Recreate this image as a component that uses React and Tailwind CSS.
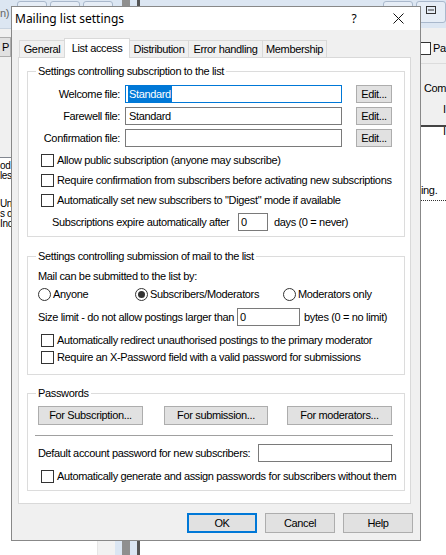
import React from 'react';

const ui = "font-['Liberation_Sans',Arial,sans-serif]";
const titleFont = "font-['Noto_Sans','Open_Sans',sans-serif]";

function Check({ children, className = '' }) {
  return (
    <div className={`flex items-center ${className}`}>
      <span className="w-[13px] h-[13px] shrink-0 border border-[#333] bg-white" />
      <span className="ml-[3px] whitespace-nowrap">{children}</span>
    </div>
  );
}

function Radio({ children, checked, className = '' }) {
  return (
    <div className={`flex items-center ${className}`}>
      <span className="w-[13px] h-[13px] shrink-0 rounded-full border border-[#333] bg-white flex items-center justify-center">
        {checked && <span className="w-[7px] h-[7px] rounded-full bg-[#333]" />}
      </span>
      <span className="ml-[2px] whitespace-nowrap">{children}</span>
    </div>
  );
}

function Btn({ children, className = '', primary }) {
  return (
    <button
      type="button"
      className={`flex items-center justify-center bg-[#e1e1e1] whitespace-nowrap ${
        primary ? 'border-2 border-[#0078d7]' : 'border border-[#adadad]'
      } ${className}`}
    >
      {children}
    </button>
  );
}

function Field({ children, className = '', focused }) {
  return (
    <div
      className={`h-[18px] bg-white border flex items-center pl-[2px] whitespace-nowrap ${
        focused ? 'border-[#0078d7]' : 'border-[#7a7a7a]'
      } ${className}`}
    >
      {children}
    </div>
  );
}

function Group({ title, className = '', children }) {
  return (
    <fieldset className={`ml-[8px] w-[378px] border border-[#dcdcdc] ${className}`}>
      <legend className="ml-[8px] px-[2px] leading-[13px]">{title}</legend>
      {children}
    </fieldset>
  );
}

function FileRow({ label, className = '', children, focused }) {
  return (
    <div className={`flex items-center h-[18px] ${className}`}>
      <span className="w-[92px] text-right whitespace-nowrap">{label}</span>
      <Field className="ml-[5px] w-[217px]" focused={focused}>{children}</Field>
      <Btn className="ml-[14px] w-[36px] h-[18px]">Edit...</Btn>
    </div>
  );
}

const tabs = [
  { name: 'General', w: 'w-[46px]' },
  { name: 'List access', w: 'w-[66px]', active: true },
  { name: 'Distribution', w: 'w-[59px]' },
  { name: 'Error handling', w: 'w-[74px]' },
  { name: 'Membership', w: 'w-[64px]' },
];

export default function App() {
  return (
    <div className={`relative w-[446px] h-[555px] overflow-hidden bg-white text-[11px] tracking-[-0.35px] text-black ${ui}`}>
      {/* main window behind the dialog */}
      <div className="flex h-full">
        <div className="w-[115px] flex flex-col">
          <div className="h-[28px] bg-[#dce6f2] flex items-start">
            <span className="mt-[5px] text-[#666]">n)</span>
            <div className="ml-[8px] mt-[1px] w-[30px] h-[22px] rounded-[3px] border border-[#a9b8cc] bg-[#e6edf6]" />
            <div className="ml-[3px] mt-[1px] w-[30px] h-[22px] rounded-[3px] border border-[#a9b8cc] bg-[#e6edf6]" />
            <div className="ml-[3px] mt-[1px] w-[30px] h-[22px] rounded-[3px] border border-[#a9b8cc] bg-[#e6edf6]" />
          </div>
          <div className="h-[129px] bg-[#f0f0f0] border-t border-[#c8d3e0]">
            <Btn className="mt-[8px] -ml-[29px] w-[40px] h-[20px] justify-end pr-[1px]">P</Btn>
          </div>
          <div className="flex-1 flex border-t border-[#828790]">
            <div className="w-[97px] leading-[10px] text-[10px]">
              <div className="mt-[3px]">od</div>
              <div>les</div>
              <div className="mt-[18px]">Uni</div>
              <div>s o</div>
              <div>Inc</div>
            </div>
            <div className="w-[18px] bg-[#f2f2f2] border-l border-[#e6e6e6]" />
          </div>
        </div>
        <div className="w-[22px] flex">
          <div className="w-[7px] bg-[#dbe6f3]" />
          <div className="w-[8px] bg-[#8f8f8f]" />
          <div className="w-[7px] bg-[#dbe6f3]" />
        </div>
        <div className="flex-1 flex flex-col border-l-[3px] border-[#555]">
          <div className="h-[28px] bg-[#dce6f2] flex items-start">
            <div className="ml-[243px] mt-[1px] w-[30px] h-[22px] rounded-[3px] border border-[#a9b8cc] bg-[#e6edf6]" />
            <div className="ml-[3px] mt-[1px] w-[30px] h-[22px] rounded-[3px] border border-[#a9b8cc] bg-[#e6edf6] flex justify-center pt-[4px]">
              <svg width="10" height="8" viewBox="0 0 10 8">
                <rect x="0.5" y="0.5" width="9" height="7" fill="none" stroke="#333" />
                <line x1="2" y1="4" x2="8" y2="4" stroke="#333" />
              </svg>
            </div>
          </div>
          <div className="h-[99px] bg-[#f0f0f0] border-b-2 border-[#444] pl-[278px] whitespace-nowrap">
            <div className="mt-[12px] flex items-center">
              <span className="w-[13px] h-[13px] border border-[#333] bg-white" />
              <span className="ml-[2px]">Pa</span>
            </div>
            <div className="mt-[6px] border-t border-[#dcdcdc] pt-[16px] pl-[6px]">Com</div>
            <div className="mt-[5px] pl-[25px]">I</div>
            <div className="mt-[5px] pl-[25px]">I</div>
          </div>
          <div className="flex-1 pl-[281px] pt-[55px] whitespace-nowrap">
            <div className="border-b border-dotted border-[#333] pb-[1px]">ing.</div>
          </div>
        </div>
      </div>

      {/* Mailing list settings dialog */}
      <div className="absolute left-[11px] top-[6px] w-[410px] h-[535px] border border-[#888] bg-[#f0f0f0] flex flex-col">
        <div className={`h-[23px] bg-white flex items-center text-[12px] tracking-normal ${titleFont}`}>
          <span className="ml-[3px]">Mailing list settings</span>
          <span className="ml-auto w-[46px] text-center">?</span>
          <span className="w-[43px] flex justify-center">
            <svg width="11" height="11" viewBox="0 0 11 11">
              <path d="M0.5 0.5 L10.5 10.5 M10.5 0.5 L0.5 10.5" stroke="#111" strokeWidth="1" />
            </svg>
          </span>
        </div>

        <div className="flex-1 px-[6px] pt-[8px]">
          <div className="h-[19px] flex items-end pl-[1px]">
            {tabs.map((t) => (
              <div
                key={t.name}
                className={`${t.w} flex items-center justify-center whitespace-nowrap border-t border-r border-[#d9d9d9] ${
                  t.active
                    ? 'h-[20px] -mb-px -ml-px border-l bg-white relative z-10'
                    : 'h-[17px] bg-[#f0f0f0] first:border-l'
                }`}
              >
                {t.name}
              </div>
            ))}
          </div>

          <div className="w-[393px] h-[447px] border border-[#d9d9d9] bg-white">
            <Group title="Settings controlling subscription to the list" className="mt-[7px] pb-[5px]">
              <FileRow label="Welcome file:" className="mt-[7px]" focused>
                <span className="bg-[#0078d7] text-white px-[1px]">Standard</span>
              </FileRow>
              <FileRow label="Farewell file:" className="mt-[4px]">
                <span className="px-[1px]">Standard</span>
              </FileRow>
              <FileRow label="Confirmation file:" className="mt-[4px]" />
              <div className="mt-[3px] pl-[13px]">
                <Check className="h-[20px]">Allow public subscription (anyone may subscribe)</Check>
                <Check className="h-[20px]">Require confirmation from subscribers before activating new subscriptions</Check>
                <Check className="h-[20px]">Automatically set new subscribers to "Digest" mode if available</Check>
              </div>
              <div className="mt-[3px] h-[18px] flex items-center pl-[24px] whitespace-nowrap">
                <span className="w-[186px]">Subscriptions expire automatically after</span>
                <Field className="w-[30px]">0</Field>
                <span className="ml-[6px]">days (0 = never)</span>
              </div>
            </Group>

            <Group title="Settings controlling submission of mail to the list" className="mt-[13px] pb-[8px]">
              <div className="mt-[5px] h-[16px] flex items-center pl-[10px]">Mail can be submitted to the list by:</div>
              <div className="mt-[2px] h-[16px] flex items-center pl-[10px]">
                <Radio className="w-[97px]">Anyone</Radio>
                <Radio className="w-[148px]" checked>Subscribers/Moderators</Radio>
                <Radio>Moderators only</Radio>
              </div>
              <div className="mt-[6px] h-[18px] flex items-center pl-[10px] whitespace-nowrap">
                <span className="w-[199px]">Size limit - do not allow postings larger than</span>
                <Field className="w-[63px]">0</Field>
                <span className="ml-[4px]">bytes (0 = no limit)</span>
              </div>
              <div className="mt-[6px] pl-[13px]">
                <Check className="h-[17px]">Automatically redirect unauthorised postings to the primary moderator</Check>
                <Check className="h-[17px]">Require an X-Password field with a valid password for submissions</Check>
              </div>
            </Group>

            <Group title="Passwords" className="mt-[12px] pb-[6px]">
              <div className="mt-[6px] flex pl-[10px]">
                <Btn className="w-[105px] h-[19px]">For Subscription...</Btn>
                <Btn className="ml-[21px] w-[104px] h-[19px]">For submission...</Btn>
                <Btn className="ml-[19px] w-[105px] h-[19px]">For moderators...</Btn>
              </div>
              <div className="mt-[10px] ml-[7px] w-[358px] border-t border-[#a0a0a0] border-b border-b-white" />
              <div className="mt-[7px] h-[18px] flex items-center pl-[10px] whitespace-nowrap">
                <span className="w-[220px]">Default account password for new subscribers:</span>
                <Field className="w-[134px]" />
              </div>
              <Check className="mt-[6px] h-[16px] pl-[13px]">
                Automatically generate and assign passwords for subscribers without them
              </Check>
            </Group>
          </div>

          <div className="mt-[9px] flex justify-end gap-[8px] pr-[1px]">
            <Btn className="w-[70px] h-[20px]" primary>OK</Btn>
            <Btn className="w-[70px] h-[20px]">Cancel</Btn>
            <Btn className="w-[70px] h-[20px]">Help</Btn>
          </div>
        </div>
      </div>
    </div>
  );
}
